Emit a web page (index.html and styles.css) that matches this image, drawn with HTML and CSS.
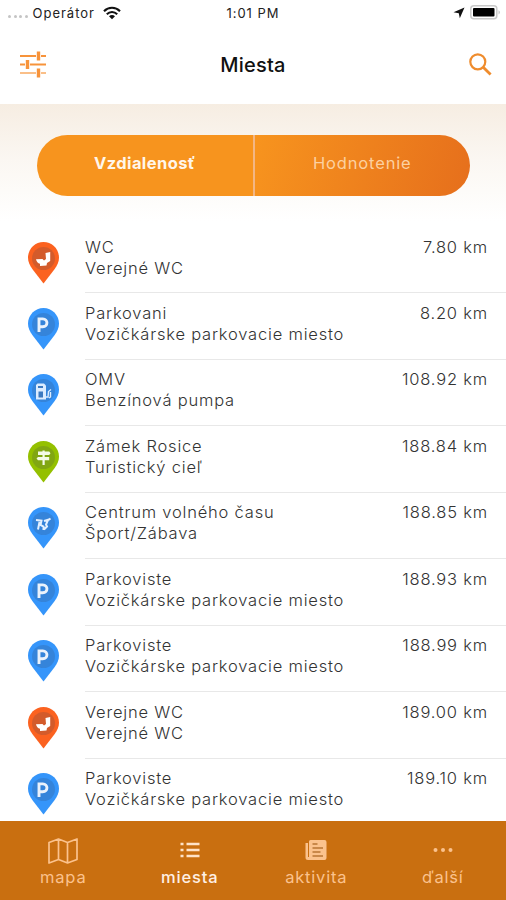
FILE: index.html
```html
<!DOCTYPE html>
<html lang="sk">
<head>
    <meta charset="UTF-8">
    <title>Miesta</title>
    <link rel="stylesheet" href="styles.css">
</head>
<body>

<!-- shared icons -->
<svg class="defs" width="0" height="0">
    <symbol id="pin" viewBox="0 0 31 42">
        <path d="M15.5 0C7 0 0 7 0 15.6 0 20 1.8 23.5 4.300 27L15.500 41.500 26.700 27C29.200 23.500 31 20 31 15.600 31 7 24 0 15.500 0z" fill="currentColor"/>
        <circle cx="15.500" cy="16.500" r="11.500" fill="#38405a" fill-opacity=".2"/>
    </symbol>
    <symbol id="wc" viewBox="0 0 31 42">
        <use href="#pin"/>
        <path d="M17.500 11l4.700-1v9l-3.200 2-.5 2.500L12 24v-2.200c-2-.7-3.700-2.300-4-4.600l6.500-.2 1.500 1.500 2-1.500z" fill="#fff"/>
    </symbol>
    <symbol id="parking" viewBox="0 0 31 42">
        <use href="#pin"/>
        <path d="M11 24V10.900h3.800c5.500 0 5.500 7.900 0 7.900H11" fill="none" stroke="#eaf2fc" stroke-width="2.900"/>
    </symbol>
    <symbol id="fuel" viewBox="0 0 31 42">
        <use href="#pin"/>
        <path d="M8 11l1.500-1.500h6.500l2 2v14H8z" fill="#dcecff"/>
        <path d="M10 12h5v2h-5zM10.500 17.500h4.500v6h-4.500z" fill="#3c79c0"/>
        <path d="M18 23h2l.5-5.500 2.500-2M21 24l1.500-1v-5" fill="none" stroke="#dcecff" stroke-width="1.400"/>
    </symbol>
    <symbol id="sign" viewBox="0 0 31 42">
        <use href="#pin"/>
        <path d="M14.500 9.500h2.200v1h4.500l1.300 1.700-1.300 1.700h-4.500v2.100h4.500v3.300h-4.500v4.700h-2.200v-4.700H10l-1.500-1.700L10 16h4.500v-2.100H10v-3.400h4.500z" fill="#f4fae6"/>
    </symbol>
    <symbol id="sport" viewBox="0 0 31 42">
        <use href="#pin"/>
        <path d="M8 13l5.500.7-1 4.300 3 1.500v3.500M11.500 15l-1.500 7.500M16 14l5-1.500 1.500-1M20 13l-2 4.500 1 2-3 3" fill="none" stroke="#e3f0ff" stroke-width="2"/>
    </symbol>
</svg>

<div class="screen">
    <div class="status">
        <div class="carrier">
            <span class="signal"><i></i><i></i><i></i><i></i></span>
            <span class="operator">Operátor</span>
            <svg width="18" height="14" viewBox="0 0 18 14">
                <path d="M1 5.200C5.500.6 12.500.6 17 5.200M3.800 8.200c3-3 7.400-3 10.400 0" fill="none" stroke="#111" stroke-width="2.100"/>
                <path d="M6 10.300c1.800-1.600 4.200-1.600 6 0l-3 3z" fill="#111"/>
            </svg>
        </div>
        <div class="time">1:01 PM</div>
        <div class="battery">
            <svg width="12" height="12" viewBox="0 0 12 12"><path d="M11.500.5L6.800 11.200 5.800 6.300.5 5.300z" fill="#111"/></svg>
            <svg width="31" height="15" viewBox="0 0 31 15">
                <rect x=".8" y=".8" width="26" height="13" rx="3" fill="#fff" stroke="#c9c9c9" stroke-width="1.500"/>
                <rect x="3" y="3" width="21.500" height="8.500" rx="1" fill="#000"/>
                <path d="M28.500 5.200v4.200c2-.8 2-3.400 0-4.200z" fill="#c9c9c9"/>
            </svg>
        </div>
    </div>

    <div class="header">
        <svg width="27" height="27" viewBox="0 0 27 27" fill="none" stroke="#f7933a">
            <path d="M0 5h16M21 5h5M0 13.500h5M10 13.500h16" stroke-width="1.800"/>
            <path d="M0 22h16M21 22h5" stroke="#fabf88" stroke-width="2"/>
            <path d="M18.500.5v9M7.500 9v9M18.500 17.500v9" stroke-width="3.400"/>
        </svg>
        <h1>Miesta</h1>
        <svg class="search" width="23" height="23" viewBox="0 0 23 23" fill="none" stroke="#ef8c2d">
            <circle cx="8.800" cy="8.800" r="7.500" stroke-width="2.200"/>
            <path d="M14.200 14.200l7.400 7.400" stroke-width="2.800"/>
        </svg>
    </div>

    <div class="filter">
        <div class="switch">
            <div class="option active">Vzdialenosť</div>
            <div class="option">Hodnotenie</div>
        </div>
    </div>

    <div class="list">
        <div class="row">
            <svg class="pin orange"><use href="#wc"/></svg>
            <div class="info"><div class="place">WC<br>Verejné WC</div><div class="km">7.80 km</div></div>
        </div>
        <div class="row">
            <svg class="pin blue"><use href="#parking"/></svg>
            <div class="info"><div class="place">Parkovani<br>Vozičkárske parkovacie miesto</div><div class="km">8.20 km</div></div>
        </div>
        <div class="row">
            <svg class="pin blue"><use href="#fuel"/></svg>
            <div class="info"><div class="place">OMV<br>Benzínová pumpa</div><div class="km">108.92 km</div></div>
        </div>
        <div class="row">
            <svg class="pin green"><use href="#sign"/></svg>
            <div class="info"><div class="place">Zámek Rosice<br>Turistický cieľ</div><div class="km">188.84 km</div></div>
        </div>
        <div class="row">
            <svg class="pin blue"><use href="#sport"/></svg>
            <div class="info"><div class="place">Centrum volného času<br>Šport/Zábava</div><div class="km">188.85 km</div></div>
        </div>
        <div class="row">
            <svg class="pin blue"><use href="#parking"/></svg>
            <div class="info"><div class="place">Parkoviste<br>Vozičkárske parkovacie miesto</div><div class="km">188.93 km</div></div>
        </div>
        <div class="row">
            <svg class="pin blue"><use href="#parking"/></svg>
            <div class="info"><div class="place">Parkoviste<br>Vozičkárske parkovacie miesto</div><div class="km">188.99 km</div></div>
        </div>
        <div class="row">
            <svg class="pin orange"><use href="#wc"/></svg>
            <div class="info"><div class="place">Verejne WC<br>Verejné WC</div><div class="km">189.00 km</div></div>
        </div>
        <div class="row">
            <svg class="pin blue"><use href="#parking"/></svg>
            <div class="info"><div class="place">Parkoviste<br>Vozičkárske parkovacie miesto</div><div class="km">189.10 km</div></div>
        </div>
    </div>

    <div class="tabs">
        <div class="tab">
            <svg width="30" height="26" viewBox="0 0 30 26" fill="none" stroke="currentColor" stroke-width="1.700" stroke-linejoin="round">
                <path d="M1 4.500L10.500 1l9 3.500L29 1v20.500L19.500 25l-9-3.500L1 25zM10.500 1v20.500M19.500 4.500V25"/>
            </svg>
            <span>mapa</span>
        </div>
        <div class="tab active">
            <svg width="20" height="26" viewBox="0 0 20 26" fill="none" stroke="#ffe3c8" stroke-width="2.600">
                <path d="M.5 6h3M.5 12h3M.5 18h3M6.500 6h13M6.500 12h13M6.500 18h13"/>
            </svg>
            <span>miesta</span>
        </div>
        <div class="tab">
            <svg width="22" height="26" viewBox="0 0 22 26">
                <path d="M5.500 2h14Q21.500 2 21.500 4v16q0 2-2 2H3Q.5 22 .5 19.500V5h2.500v14h1V3.500Q4 2 5.500 2z" fill="currentColor"/>
                <path d="M7.500 6h5M7.500 10h10.500M7.500 14h8M7.500 18h10.500" stroke="#b97535" stroke-width="1.300"/>
            </svg>
            <span>aktivita</span>
        </div>
        <div class="tab">
            <svg width="20" height="26" viewBox="0 0 20 26" fill="currentColor">
                <circle cx="2.500" cy="12" r="2"/><circle cx="10" cy="12" r="2"/><circle cx="17.500" cy="12" r="2"/>
            </svg>
            <span>ďalší</span>
        </div>
    </div>
</div>

</body>
</html>
```

FILE: styles.css
```css
body {
    margin: 0;
    font-family: Inter, "Open Sans", sans-serif;
    background-color: #fff;
}
.defs {
    display: block;
}
.screen {
    width: 506px;
    height: 900px;
    display: flex;
    flex-direction: column;
    overflow: hidden;
}
.status {
    height: 25px;
    flex-shrink: 0;
    display: grid;
    grid-template-columns: 1fr 80px 1fr;
    align-items: center;
    padding: 0 5px;
    box-sizing: border-box;
    font-size: 13px;
    color: #222;
}
.carrier {
    display: flex;
    align-items: center;
    gap: 5px;
    padding-left: 3px;
}
.operator {
    margin-right: 3px;
    letter-spacing: 1px;
}
.signal {
    display: flex;
    gap: 2.500px;
    padding-top: 8px;
}
.signal i {
    width: 3px;
    height: 3px;
    border-radius: 50%;
    background-color: #c4c4c4;
}
.time {
    text-align: center;
    letter-spacing: 1px;
}
.battery {
    display: flex;
    justify-content: flex-end;
    align-items: center;
    gap: 5px;
}
.header {
    height: 79px;
    flex-shrink: 0;
    box-sizing: border-box;
    display: grid;
    grid-template-columns: 1fr auto 1fr;
    align-items: center;
    padding: 0 14px 0 20px;
}
.search {
    justify-self: end;
}
h1 {
    margin: 0 6px 0 0;
    font-size: 20px;
    font-weight: 500;
    letter-spacing: 0.2px;
    color: #111;
}
.filter {
    height: 123px;
    flex-shrink: 0;
    box-sizing: border-box;
    padding: 31px 36px 0 37px;
    background: linear-gradient(#f6ede2, #fbf7f2 45%, #fff 95%);
}
.switch {
    display: flex;
    height: 61px;
    border-radius: 31px;
    overflow: hidden;
}
.option {
    flex: 1;
    line-height: 56px;
    text-align: center;
    font-size: 16.500px;
    letter-spacing: 0.85px;
    color: #fcd0a0;
    background: linear-gradient(105deg, #f7941e, #e66f1c);
}
.option.active {
    font-weight: 700;
    letter-spacing: 0.4px;
    color: #fff6ea;
    background: #f7941e;
    border-right: 2px solid #f3b684;
}
.list {
    flex: 1;
    min-height: 0;
    overflow: hidden;
}
.row {
    display: flex;
    height: 66.440px;
    padding-left: 28px;
}
.pin {
    width: 31px;
    height: 42px;
    margin: 14.500px 26px 0 0;
    flex-shrink: 0;
}
.orange {
    color: #fb6220;
}
.blue {
    color: #3595fa;
}
.green {
    color: #94c000;
}
.info {
    flex: 1;
    display: flex;
    justify-content: space-between;
    box-sizing: border-box;
    padding: 9.500px 18px 0 0;
    border-bottom: 1px solid #e8e8e8;
    font-size: 16.500px;
    font-weight: 300;
    line-height: 21px;
    letter-spacing: 0.8px;
    color: #333;
}
.tabs {
    height: 79px;
    flex-shrink: 0;
    display: grid;
    grid-template-columns: repeat(4, 1fr);
    background-color: #c96f10;
}
.tab {
    display: flex;
    flex-direction: column;
    align-items: center;
    padding-top: 17px;
    font-size: 16.500px;
    line-height: 26px;
    letter-spacing: 0.8px;
    color: #fbc28d;
}
.tab.active {
    font-weight: 500;
    color: #fff0e4;
}
```
